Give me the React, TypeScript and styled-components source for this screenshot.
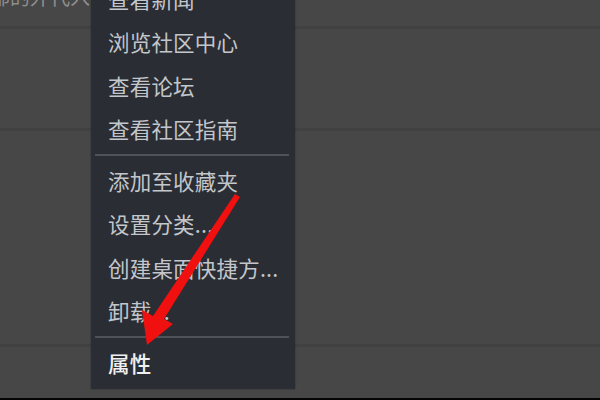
import React from "react";
import styled, { createGlobalStyle } from "styled-components";

const Global = createGlobalStyle`
  html, body { margin: 0; padding: 0; background: #474747; }
  body { width: 600px; height: 400px; overflow: hidden; }
`;

const Page = styled.div`
  position: relative;
  width: 600px;
  height: 400px;
  display: flex;
  flex-direction: column;
  background: #474747;
  overflow: hidden;
  font-family: "Noto Sans CJK SC", "Noto Sans", sans-serif;
`;

const Row = styled.div<{ $h: number; $line?: boolean }>`
  height: ${(p) => p.$h}px;
  flex: none;
  box-sizing: border-box;
  border-bottom: ${(p) => (p.$line ? "3px solid #414141" : "none")};
  display: flex;
  align-items: flex-start;
  overflow: hidden;
`;

const CutText = styled.span`
  margin-top: -14px;
  margin-left: -10px;
  font-size: 20px;
  line-height: 22px;
  color: #8e8e8e;
  white-space: nowrap;
`;

const BottomBar = styled.div`
  flex: 1;
  background: #050505;
`;

const Menu = styled.div`
  position: absolute;
  left: 91px;
  top: -23.5px;
  width: 204px;
  padding-bottom: 5px;
  background: #2a2d33;
  display: flex;
  flex-direction: column;
  box-shadow: 0 0 2px rgba(0, 0, 0, 0.35);
`;

const Item = styled.div<{ $active?: boolean }>`
  height: 43.5px;
  display: flex;
  align-items: center;
  padding-left: 17px;
  font-size: 21.5px;
  letter-spacing: 0.2px;
  white-space: nowrap;
  color: ${(p) => (p.$active ? "#f0f0f0" : "#c3c6ca")};
  font-weight: ${(p) => (p.$active ? 500 : 400)};
`;

const Separator = styled.div`
  height: 2px;
  margin: 3px 6px 3px 4px;
  background: #4d5158;
`;

const Arrow = styled.svg`
  position: absolute;
  left: 0;
  top: 0;
  pointer-events: none;
`;

const groups: string[][] = [
  ["查看新闻", "浏览社区中心", "查看论坛", "查看社区指南"],
  ["添加至收藏夹", "设置分类...", "创建桌面快捷方...", "卸载..."],
];

export default function App() {
  return (
    <Page>
      <Global />
      <Row $h={29} $line>
        <CutText>部的外代入</CutText>
      </Row>
      <Row $h={102} $line />
      <Row $h={216} $line />
      <Row $h={51} />
      <BottomBar />
      <Menu>
        {groups.map((g, gi) => (
          <React.Fragment key={gi}>
            {g.map((t) => (
              <Item key={t}>{t}</Item>
            ))}
            <Separator />
          </React.Fragment>
        ))}
        <Item $active>属性</Item>
      </Menu>
      <Arrow width="600" height="400" viewBox="0 0 600 400">
        <polygon
          points="235,194 240,197 164,319 173,324 147,345 142,310 153,316"
          fill="#f01010"
        />
      </Arrow>
    </Page>
  );
}
